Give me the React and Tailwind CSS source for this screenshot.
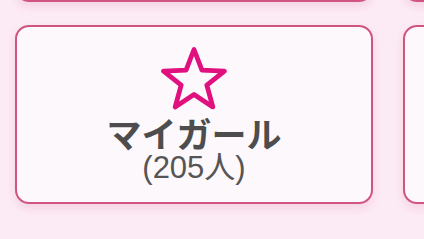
import React from 'react';

const Star = () => (
    <svg width="70" height="64" viewBox="0 0 70 64" fill="none">
        <polygon
            points="35,2.5 42.94,23.08 65.43,24.11 47.84,38.17 53.81,59.89 35,47.5 16.19,59.89 22.16,38.17 4.57,24.11 27.06,23.08"
            stroke="#e0107f"
            strokeWidth="4.8"
            strokeLinejoin="round"
        />
    </svg>
);

const Card = ({ title, count, empty }) => (
    <div className="h-[179px] rounded-[14px] border-[2.5px] border-[#cf5580] bg-[#fdf8fc] shadow-[0_4px_10px_rgba(214,95,138,0.18)] flex flex-col items-center pt-[20px]">
        {!empty && (
            <>
                <Star />
                <div className="mt-[4px] text-[35px] leading-none font-bold text-[#4d4d4d]">{title}</div>
                <div
                    className="mt-[2px] text-[31px] leading-none text-[#555555]"
                    style={{ fontFamily: '"Liberation Sans", "Noto Sans CJK JP", sans-serif' }}
                >
                    ({count}人)
                </div>
            </>
        )}
    </div>
);

export default function App() {
    return (
        <div
            className="w-[424px] h-[239px] overflow-hidden bg-[#fcebf5]"
            style={{ fontFamily: '"Noto Sans CJK JP", "Noto Sans", sans-serif' }}
        >
            <div className="grid grid-cols-[358px_358px] gap-x-[30px] gap-y-[23px] pl-[15px] mt-[-177px]">
                <Card empty />
                <Card empty />
                <Card title="マイガール" count={205} />
                <Card empty />
            </div>
        </div>
    );
}
